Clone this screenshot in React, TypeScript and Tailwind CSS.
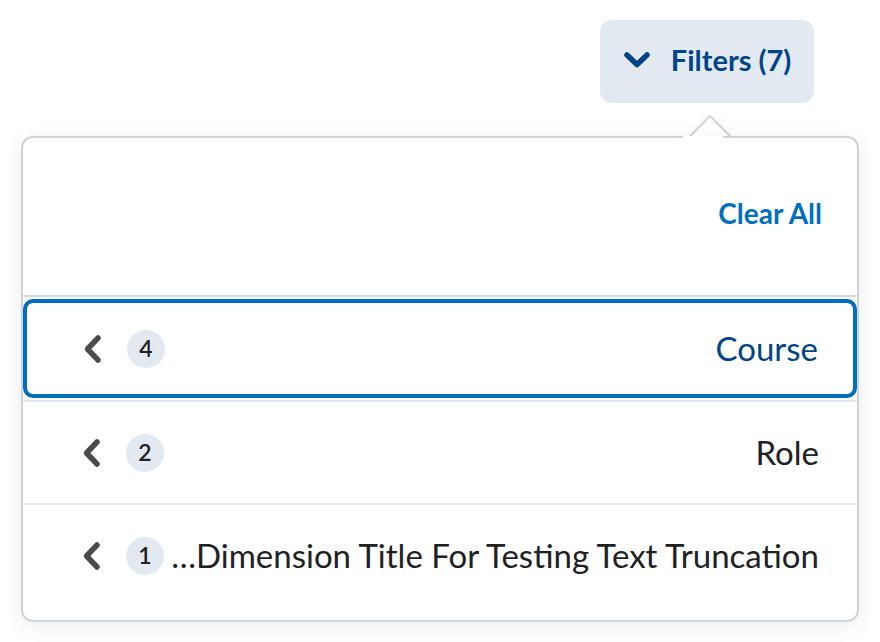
import React from "react";

interface Dimension {
  id: string;
  title: string;
  count: number;
  focused?: boolean;
}

const dimensions: Dimension[] = [
  { id: "course", title: "Course", count: 4, focused: true },
  { id: "role", title: "Role", count: 2 },
  { id: "long", title: "…Dimension Title For Testing Text Truncation", count: 1 },
];

function ChevronLeft() {
  return (
    <svg width="22" height="30" viewBox="0 0 22 30" className="shrink-0">
      <polyline
        points="16,4 5.5,15 16,26"
        fill="none"
        stroke="#494c4e"
        strokeWidth="5.5"
        strokeLinecap="round"
        strokeLinejoin="round"
      />
    </svg>
  );
}

function ChevronDown() {
  return (
    <svg width="28" height="20" viewBox="0 0 28 20" className="shrink-0">
      <polyline
        points="4,5 14,14.5 24,5"
        fill="none"
        stroke="#004489"
        strokeWidth="5.5"
        strokeLinecap="round"
        strokeLinejoin="round"
      />
    </svg>
  );
}

function RowContent({ item, focused }: { item: Dimension; focused?: boolean }) {
  return (
    <div className={`flex items-center h-full ${focused ? "pl-[55px] pr-[35px]" : "pl-[58px] pr-[38px]"}`}>
      <ChevronLeft />
      <span className="ml-[23px] shrink-0 w-[38px] h-[38px] rounded-full bg-[#e3e9f1] flex items-center justify-center text-[23px] font-semibold text-[#202122]">
        {item.count}
      </span>
      <span
        className={`flex-1 min-w-0 ml-[3px] text-right whitespace-nowrap overflow-hidden text-[33px] ${
          focused ? "text-[#004489]" : "text-[#202122]"
        }`}
      >
        {item.title}
      </span>
    </div>
  );
}

function DimensionRow({ item }: { item: Dimension }) {
  if (item.focused) {
    return (
      <div className="h-[103px] py-[2px]">
        <div className="h-full border-4 border-[#006fbf] rounded-[10px]">
          <RowContent item={item} focused />
        </div>
      </div>
    );
  }
  return (
    <div className="h-[101px]">
      <RowContent item={item} />
    </div>
  );
}

export default function App() {
  return (
    <div
      className="w-[880px] h-[642px] bg-white overflow-hidden"
      style={{ fontFamily: "Lato, 'Open Sans', sans-serif" }}
    >
      <div className="flex justify-end pt-5 pr-[66px]">
        <button className="h-[83px] w-[214px] rounded-[12px] bg-[#e3e9f1] flex items-center justify-center gap-[20px] pb-[3px] text-[29px] font-bold text-[#004489]">
          <ChevronDown />
          <span>Filters (7)</span>
        </button>
      </div>

      <div className="relative mt-[33px] ml-[21px] w-[838px]">
        <div className="absolute left-[674px] -top-[15px] w-[30px] h-[30px] rotate-45 bg-white border-2 border-[#cdd5dc] shadow-[0_0_12px_rgba(0,0,0,0.06)]" />
        <div className="relative rounded-[12px] border-2 border-[#cdd5dc] bg-white shadow-[0_4px_20px_rgba(0,0,0,0.08)] pb-[14px]">
          <div className="absolute left-[660px] -top-[2px] w-[40px] h-[20px] bg-white" />
          <div className="relative h-[157px] flex items-center justify-end pr-[35px] pb-[8px]">
            <button className="text-[28px] font-bold text-[#006fbf]">Clear All</button>
          </div>
          <div className="border-t-2 border-[#d3d9e3]">
            {dimensions.map((d, i) => (
              <div key={d.id} className={i < dimensions.length - 1 ? "border-b-2 border-[#e3e9f1]" : ""}>
                <DimensionRow item={d} />
              </div>
            ))}
          </div>
        </div>
      </div>
    </div>
  );
}
